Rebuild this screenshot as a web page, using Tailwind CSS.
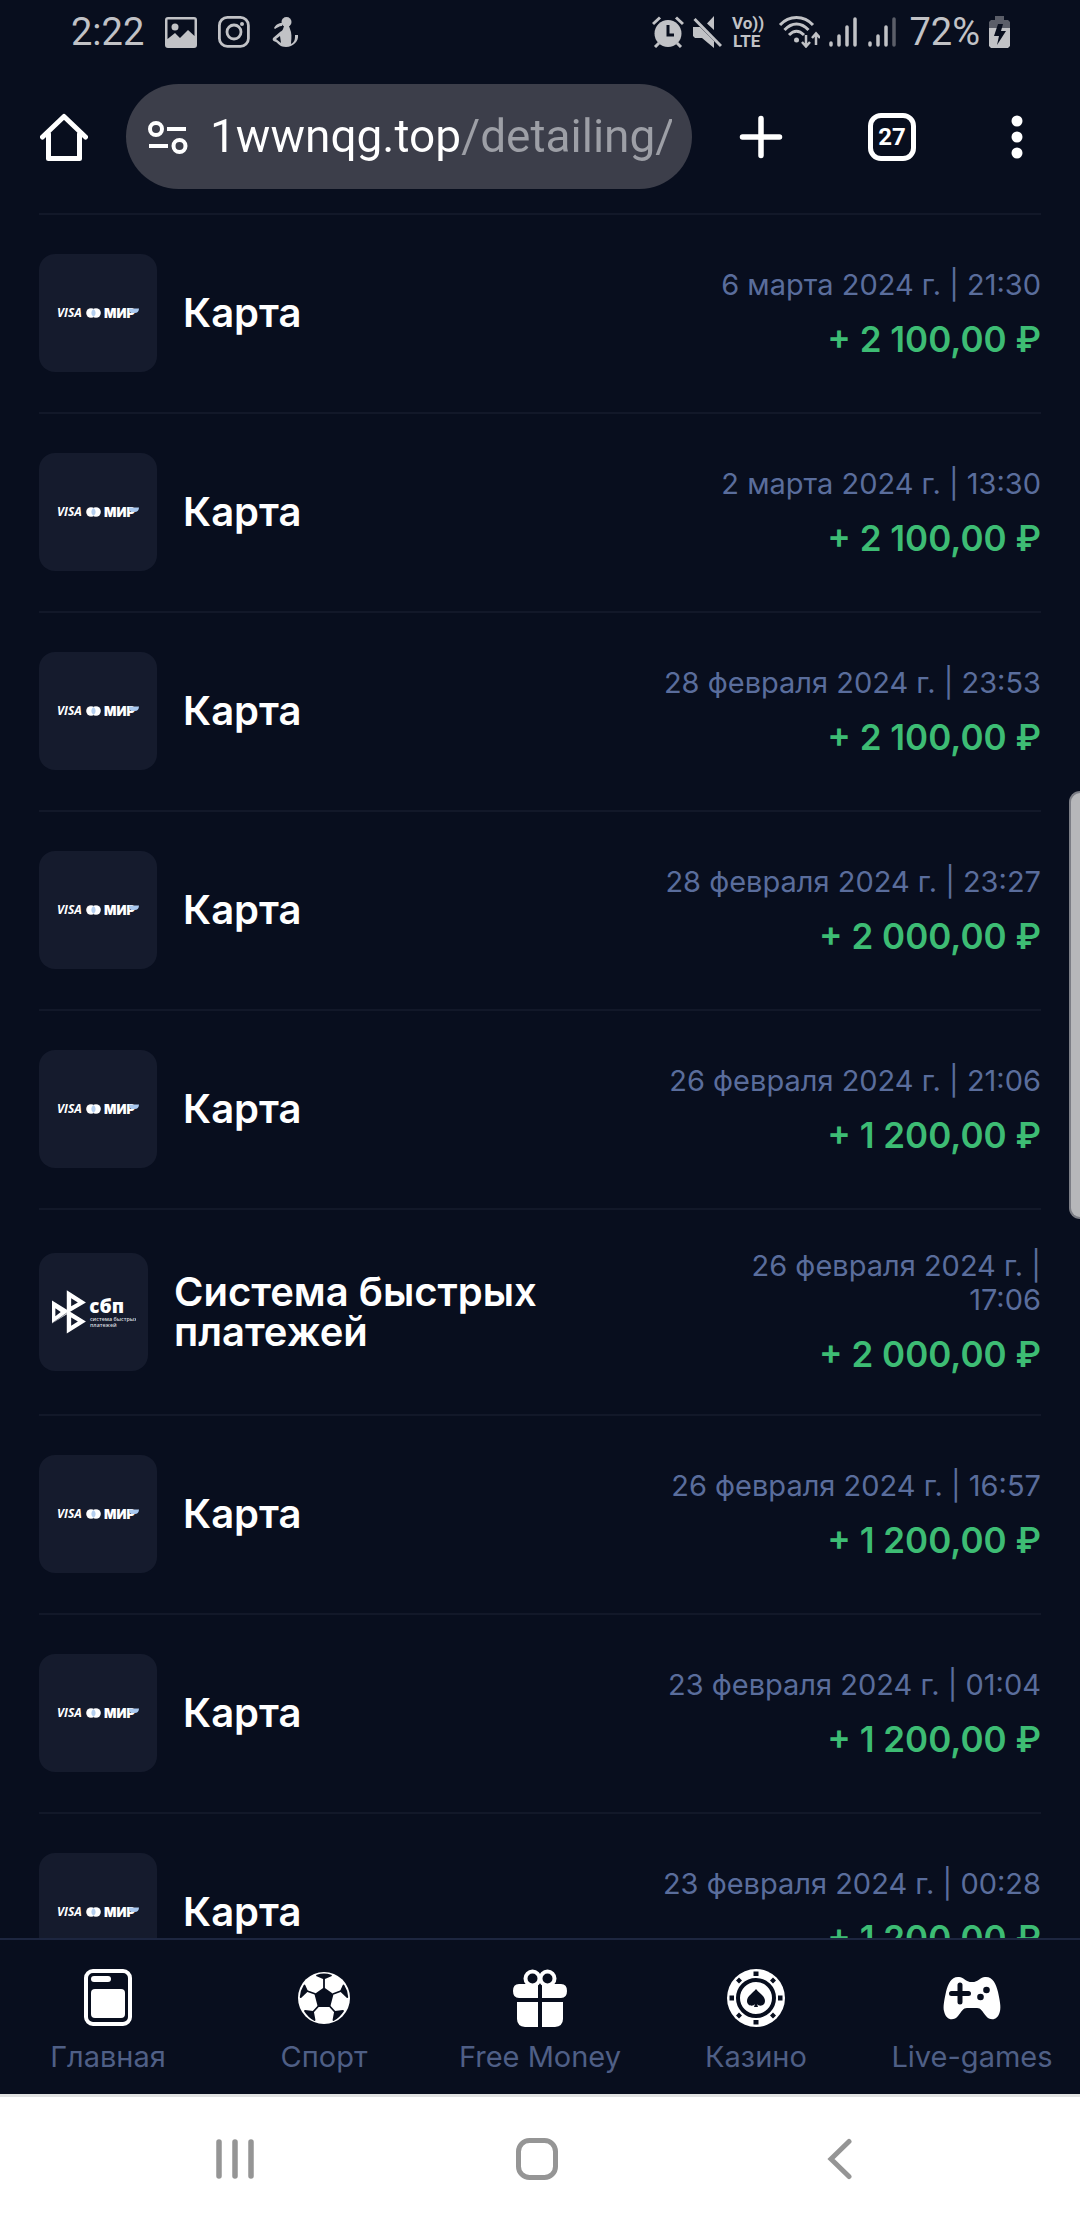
<!DOCTYPE html>
<html lang="ru">

<head>
  <meta charset="utf-8">
  <meta name="viewport" content="width=device-width, initial-scale=1">
  <title>Детализация</title>
  <script src="https://cdn.jsdelivr.net/npm/@tailwindcss/browser@4"></script>
</head>

<body class="relative flex h-screen flex-col overflow-hidden bg-[#080e1e] font-['Inter','Noto_Sans',sans-serif] text-white">
  <!-- logos -->
  <svg class="hidden">
    <symbol id="cards" viewBox="0 0 82 12">
      <text x="0" y="10" font-family="Open Sans, sans-serif" font-size="12" font-weight="700" font-style="italic" fill="#fff">VISA</text>
      <circle cx="34" cy="6" r="4.8" fill="#fff" />
      <circle cx="39" cy="6" r="4.8" fill="#fff" />
      <path d="M36.5 2a4.8 4.8 0 0 1 0 8a4.8 4.8 0 0 1 0-8z" fill="#b4cff0" />
      <text x="47" y="11" font-family="Inter, sans-serif" font-size="13" font-weight="900" fill="#fff">МИР</text>
      <path d="M72 1.5h10c0 3-2 4.500-4 4.500h-3c-1.500 0-3-2-3-4.500z" fill="#a9c8ee" />
    </symbol>
    <symbol id="sbp" viewBox="0 0 250 130">
      <path fill="#fff" fill-rule="evenodd" d="M44 0L101 37L44 70zM57 24V48L77 37z" />
      <path fill="#fff" fill-rule="evenodd" d="M0 31L101 93L44 129V72L0 99zM10 54V78L26 65zM57 81V106L77 93z" />
      <path d="M0 99L44 68" stroke="#151b2d" stroke-width="1.500" />
      <text x="111" y="69" font-family="Open Sans, sans-serif" font-size="56" font-weight="800" fill="#fff">сбп</text>
      <text x="113" y="93" font-family="Open Sans, sans-serif" font-size="16" fill="#d7d9df">система быстрых</text>
      <text x="113" y="109" font-family="Open Sans, sans-serif" font-size="16" fill="#d7d9df">платежей</text>
    </symbol>
  </svg>

  <!-- status bar -->
  <div class="flex h-16 shrink-0 items-center justify-between pr-[70px] pl-[71px] font-['Roboto',sans-serif] text-[38px] leading-none text-[#c1c2c6]">
    <div class="flex items-center gap-[21px]">
      <span>2:22</span>
      <svg class="h-8 w-8" viewBox="0 0 32 32" fill="currentColor">
        <path fill-rule="evenodd" d="M3 1h26a3 3 0 0 1 3 3v25a3 3 0 0 1-3 3H3a3 3 0 0 1-3-3V4a3 3 0 0 1 3-3zM2.500 3.500V23L10 17L15 22L23 14L29.500 20V3.500z" />
        <circle cx="10" cy="11" r="3.500" />
      </svg>
      <svg class="h-8 w-8" viewBox="0 0 32 32" fill="none" stroke="currentColor" stroke-width="2.800">
        <rect x="1.400" y="1.400" width="29" height="29" rx="8" />
        <circle cx="16" cy="16" r="7" />
        <circle cx="24" cy="8" r="2" fill="currentColor" stroke="none" />
      </svg>
      <svg class="h-8 w-7" viewBox="0 0 28 32" fill="currentColor">
        <circle cx="15.500" cy="6" r="5" />
        <path d="M3 12C6 7 9 7 12 7L11 10C8 10 6 12 4 13z" />
        <path fill-rule="evenodd" d="M13 10H18L20 16C21 21 20 25 20 28C24 26 24 23 24 19H27C28 25 22 31 15 31C9 31 8 28 5 26C2 25 1 24 2 22L9 16C11 15 12 14 13 10zM9 20L5 23L10 27z" />
      </svg>
    </div>
    <div class="flex items-center gap-[9px]">
      <svg class="h-8 w-8" viewBox="0 0 32 32" fill="none" stroke="currentColor" stroke-width="3">
        <circle cx="16" cy="17.500" r="13.500" fill="currentColor" stroke="none" />
        <path d="M1 8L8 1.500M24 1.500L31 8M7 27L3 31M25 27L29 31" />
        <path d="M16 9V19H22" stroke="#080e1e" />
      </svg>
      <svg class="h-8 w-[29px]" viewBox="0 0 29 32" fill="currentColor">
        <path d="M0 11H7L21 25V32L9 22H2L0 20zM21 0V14L14 7.500z" />
        <path d="M1.500 3L28 30" stroke="currentColor" stroke-width="3" />
      </svg>
      <svg class="h-10 w-[34px]" viewBox="0 0 34 40" fill="currentColor" font-family="Roboto, sans-serif" font-weight="700">
        <text x="1" y="17" font-size="17">Vo))</text>
        <text x="2" y="35" font-size="17">LTE</text>
      </svg>
      <svg class="h-8 w-[46px]" viewBox="0 0 46 32" fill="none" stroke="currentColor" stroke-width="3">
        <path d="M6 9C15-1 30-1 39 9M10.500 14C18 6 27 6 34.500 14M15 19C20 14 25 14 30 19" />
        <circle cx="22.500" cy="24" r="2.500" fill="currentColor" stroke="none" />
        <path d="M32 19V30M28 26L32 30.500L36 26M42 29V18M38 22L42 17.500L46 22" stroke-width="2.500" />
      </svg>
      <svg class="h-8 w-7" viewBox="0 0 28 32" fill="none" stroke="currentColor" stroke-width="3.500" stroke-linecap="round">
        <path d="M2 27V29M10 20V29M18 11V29M26 3V29" />
      </svg>
      <svg class="h-8 w-[30px]" viewBox="0 0 30 32" fill="none" stroke="currentColor" stroke-width="3.500" stroke-linecap="round">
        <path d="M4 27V29M12 20V29M20 11V29" />
        <path d="M28 3V29" stroke="#5b5e69" />
      </svg>
      <span class="pl-1">72%</span>
      <svg class="h-8 w-[21px]" viewBox="0 0 21 32">
        <path d="M6 0H15V4H19L21 6V13H0V6L2 4H6z" fill="#5b5e69" />
        <path d="M0 12H21V30L19 32H2L0 30z" fill="#c1c2c6" />
        <path d="M9 8H14L12 15H17L8 29L10 20H5z" fill="#080e1e" />
      </svg>
    </div>
  </div>

  <!-- browser bar -->
  <div class="flex shrink-0 items-center pt-5 pb-6 pl-10">
    <button type="button" aria-label="Домой" class="mr-[38px] shrink-0">
      <svg class="size-12" viewBox="0 0 48 48" fill="none" stroke="#fff" stroke-width="5" stroke-linecap="round" stroke-linejoin="round">
        <path d="M2.500 24L24 3.500L45.500 24M8.500 21V45.500H39.500V21" />
      </svg>
    </button>
    <div class="flex h-[105px] min-w-0 flex-1 items-center rounded-full bg-[#3c3e4a] pr-5 pl-[22px]">
      <svg class="h-9 w-10 shrink-0" viewBox="0 0 40 36" fill="none" stroke="#fff" stroke-width="4">
        <circle cx="8" cy="10" r="6" />
        <path d="M19 10H38M1 27H20" />
        <circle cx="31.500" cy="27" r="6" />
      </svg>
      <input type="text" aria-label="Адрес" value="1wwnqg.top/detailing/"
        class="ml-[22px] min-w-0 flex-1 bg-[linear-gradient(to_right,#fff_252px,#9d9fa6_252px)] bg-clip-text font-['Roboto',sans-serif] text-[46px] text-transparent outline-none" />
    </div>
    <button type="button" aria-label="Новая вкладка" class="flex w-[138px] shrink-0 justify-center">
      <svg class="size-11" viewBox="0 0 44 44" stroke="#fff" stroke-width="5.500" stroke-linecap="round">
        <path d="M22 3.500V40.500M3.500 22H40.500" />
      </svg>
    </button>
    <button type="button" aria-label="Вкладки" class="flex w-31 shrink-0 justify-center">
      <span class="flex size-12 items-center justify-center rounded-[13px] border-5 border-white font-['Roboto',sans-serif] text-2xl leading-none font-bold">27</span>
    </button>
    <button type="button" aria-label="Меню" class="flex w-[126px] shrink-0 justify-center">
      <svg class="h-11 w-3" viewBox="0 0 12 44" fill="#fff">
        <circle cx="6" cy="6" r="5.500" />
        <circle cx="6" cy="22" r="5.500" />
        <circle cx="6" cy="38" r="5.500" />
      </svg>
    </button>
  </div>

  <!-- payments -->
  <ul class="min-h-0 flex-1 overflow-hidden px-[39px] text-[40px] leading-10 font-semibold">
    <li class="flex items-center gap-[26px] border-t-2 border-[#121829] pt-[39px] pb-10">
      <div class="flex h-[118px] w-[118px] shrink-0 items-center justify-center rounded-2xl bg-[#151b2d]"><svg class="h-3 w-[82px]"><use href="#cards" /></svg></div>
      <h2 class="max-w-100">Карта</h2>
      <div class="ml-auto text-right">
        <p class="text-[29px] leading-[34px] font-normal text-[#5a6d9c]">6 марта 2024 г. | 21:30</p>
        <p class="mt-[18px] text-[35px] leading-[39px] text-[#3dbc74]">+ 2 100,00 ₽</p>
      </div>
    </li>
    <li class="flex items-center gap-[26px] border-t-2 border-[#121829] pt-[39px] pb-10">
      <div class="flex h-[118px] w-[118px] shrink-0 items-center justify-center rounded-2xl bg-[#151b2d]"><svg class="h-3 w-[82px]"><use href="#cards" /></svg></div>
      <h2 class="max-w-100">Карта</h2>
      <div class="ml-auto text-right">
        <p class="text-[29px] leading-[34px] font-normal text-[#5a6d9c]">2 марта 2024 г. | 13:30</p>
        <p class="mt-[18px] text-[35px] leading-[39px] text-[#3dbc74]">+ 2 100,00 ₽</p>
      </div>
    </li>
    <li class="flex items-center gap-[26px] border-t-2 border-[#121829] pt-[39px] pb-10">
      <div class="flex h-[118px] w-[118px] shrink-0 items-center justify-center rounded-2xl bg-[#151b2d]"><svg class="h-3 w-[82px]"><use href="#cards" /></svg></div>
      <h2 class="max-w-100">Карта</h2>
      <div class="ml-auto text-right">
        <p class="text-[29px] leading-[34px] font-normal text-[#5a6d9c]">28 февраля 2024 г. | 23:53</p>
        <p class="mt-[18px] text-[35px] leading-[39px] text-[#3dbc74]">+ 2 100,00 ₽</p>
      </div>
    </li>
    <li class="flex items-center gap-[26px] border-t-2 border-[#121829] pt-[39px] pb-10">
      <div class="flex h-[118px] w-[118px] shrink-0 items-center justify-center rounded-2xl bg-[#151b2d]"><svg class="h-3 w-[82px]"><use href="#cards" /></svg></div>
      <h2 class="max-w-100">Карта</h2>
      <div class="ml-auto text-right">
        <p class="text-[29px] leading-[34px] font-normal text-[#5a6d9c]">28 февраля 2024 г. | 23:27</p>
        <p class="mt-[18px] text-[35px] leading-[39px] text-[#3dbc74]">+ 2 000,00 ₽</p>
      </div>
    </li>
    <li class="flex items-center gap-[26px] border-t-2 border-[#121829] pt-[39px] pb-10">
      <div class="flex h-[118px] w-[118px] shrink-0 items-center justify-center rounded-2xl bg-[#151b2d]"><svg class="h-3 w-[82px]"><use href="#cards" /></svg></div>
      <h2 class="max-w-100">Карта</h2>
      <div class="ml-auto text-right">
        <p class="text-[29px] leading-[34px] font-normal text-[#5a6d9c]">26 февраля 2024 г. | 21:06</p>
        <p class="mt-[18px] text-[35px] leading-[39px] text-[#3dbc74]">+ 1 200,00 ₽</p>
      </div>
    </li>
    <li class="flex items-center gap-[26px] border-t-2 border-[#121829] pt-[39px] pb-10">
      <div class="flex h-[118px] w-[109px] shrink-0 items-center justify-center rounded-2xl bg-[#151b2d]"><svg class="h-11 w-[84px]"><use href="#sbp" /></svg></div>
      <h2 class="max-w-100">Система быстрых платежей</h2>
      <div class="ml-auto max-w-75 text-right">
        <p class="text-[29px] leading-[34px] font-normal text-[#5a6d9c]">26 февраля 2024 г. | 17:06</p>
        <p class="mt-[18px] text-[35px] leading-[39px] text-[#3dbc74]">+ 2 000,00 ₽</p>
      </div>
    </li>
    <li class="flex items-center gap-[26px] border-t-2 border-[#121829] pt-[39px] pb-10">
      <div class="flex h-[118px] w-[118px] shrink-0 items-center justify-center rounded-2xl bg-[#151b2d]"><svg class="h-3 w-[82px]"><use href="#cards" /></svg></div>
      <h2 class="max-w-100">Карта</h2>
      <div class="ml-auto text-right">
        <p class="text-[29px] leading-[34px] font-normal text-[#5a6d9c]">26 февраля 2024 г. | 16:57</p>
        <p class="mt-[18px] text-[35px] leading-[39px] text-[#3dbc74]">+ 1 200,00 ₽</p>
      </div>
    </li>
    <li class="flex items-center gap-[26px] border-t-2 border-[#121829] pt-[39px] pb-10">
      <div class="flex h-[118px] w-[118px] shrink-0 items-center justify-center rounded-2xl bg-[#151b2d]"><svg class="h-3 w-[82px]"><use href="#cards" /></svg></div>
      <h2 class="max-w-100">Карта</h2>
      <div class="ml-auto text-right">
        <p class="text-[29px] leading-[34px] font-normal text-[#5a6d9c]">23 февраля 2024 г. | 01:04</p>
        <p class="mt-[18px] text-[35px] leading-[39px] text-[#3dbc74]">+ 1 200,00 ₽</p>
      </div>
    </li>
    <li class="flex items-center gap-[26px] border-t-2 border-[#121829] pt-[39px] pb-10">
      <div class="flex h-[118px] w-[118px] shrink-0 items-center justify-center rounded-2xl bg-[#151b2d]"><svg class="h-3 w-[82px]"><use href="#cards" /></svg></div>
      <h2 class="max-w-100">Карта</h2>
      <div class="ml-auto text-right">
        <p class="text-[29px] leading-[34px] font-normal text-[#5a6d9c]">23 февраля 2024 г. | 00:28</p>
        <p class="mt-[18px] text-[35px] leading-[39px] text-[#3dbc74]">+ 1 200,00 ₽</p>
      </div>
    </li>
  </ul>

  <!-- edge handle over the list -->
  <div class="absolute top-[791px] right-0 h-[428px] w-[11px] rounded-l-[11px] border-2 border-r-0 border-[#7b7d85] bg-[#b6b7ba]"></div>

  <!-- site nav -->
  <nav class="grid shrink-0 grid-cols-5 border-t-2 border-[#1d2640] pt-[29px] pb-[19px] text-[29px] leading-9 text-[#4f5f86]">
    <a href="#" class="flex flex-col items-center gap-3">
      <svg class="size-[58px]" viewBox="0 0 58 58" fill="#fff">
        <rect x="7" y="2" width="44" height="53" rx="7" fill="none" stroke="#fff" stroke-width="4" />
        <rect x="12" y="7" width="20" height="6" rx="3" />
        <rect x="12" y="20" width="34" height="29" rx="4" />
      </svg>
      Главная
    </a>
    <a href="#" class="flex flex-col items-center gap-3">
      <svg class="size-[58px]" viewBox="0 0 58 58">
        <circle cx="29" cy="29" r="26" fill="#fff" />
        <g fill="#080e1e" stroke="#080e1e" stroke-width="1.800" stroke-linejoin="round">
          <path d="M29 19.500L37.500 25.500L34.500 37H23.500L20.500 25.500z" />
          <path d="M29 19V9.500M38 25L46 22M34.500 37L40 43M23.500 37L18 43M20.500 25L12 22" />
          <path d="M22 6.500Q29 4.500 36 6.500L29 9.500z" />
          <path d="M48.500 16.500Q52 22 52.300 28L46 22z" />
          <path d="M48 42Q44 48 38.500 51L40 43z" />
          <path d="M10 42Q14 48 19.500 51L18 43z" />
          <path d="M9.500 16.500Q6 22 5.700 28L12 22z" />
        </g>
      </svg>
      Спорт
    </a>
    <a href="#" class="flex flex-col items-center gap-3">
      <svg class="size-[58px]" viewBox="0 0 58 58" fill="#fff">
        <path d="M8 15H27V29H8Q2 29 2 22Q2 15 8 15zM31 15H50Q56 15 56 22Q56 29 50 29H31z" />
        <path d="M6 33H27V58H14Q6 57 6 50zM31 33H52V50Q52 57 44 58H31z" />
        <circle cx="21.500" cy="9.500" r="7" fill="none" stroke="#fff" stroke-width="4" />
        <circle cx="36.500" cy="9.500" r="7" fill="none" stroke="#fff" stroke-width="4" />
      </svg>
      Free Money
    </a>
    <a href="#" class="flex flex-col items-center gap-3">
      <svg class="size-[58px]" viewBox="0 0 58 58">
        <circle cx="29" cy="29" r="29" fill="#fff" />
        <circle cx="29" cy="29" r="18" fill="none" stroke="#080e1e" stroke-width="4" />
        <g fill="#080e1e">
          <path d="M26.500 2.500h5v4.500h-5zM26.500 51h5v4.500h-5zM2.500 26.500h4.500v5H2.500zM51 26.500h4.500v5H51z" />
          <path d="M9 11.500L12 8.500L15 11.500L12 14.500zM43 11.500L46 8.500L49 11.500L46 14.500zM9 46.500L12 43.500L15 46.500L12 49.500zM43 46.500L46 43.500L49 46.500L46 49.500z" />
          <path d="M29 20C32 24 38 27 38 32C38 37 32 38 30 35L31 38H27L28 35C26 38 20 37 20 32C20 27 26 24 29 20z" />
        </g>
      </svg>
      Казино
    </a>
    <a href="#" class="flex flex-col items-center gap-3">
      <svg class="size-[58px]" viewBox="0 0 58 58" fill="#fff">
        <path d="M15 8C20 7 22 13 29 13C36 13 38 7 43 8C50 8 53 15 55 23C57 32 58 38 57 42C55 52 47 52 43 47C39 42 38 39 34 39H24C20 39 19 42 15 47C11 52 3 52 1 42C0 38 1 32 3 23C5 15 8 8 15 8z" />
        <path d="M17 16V33M8.500 24.500H25.500" stroke="#080e1e" stroke-width="5" stroke-linecap="round" />
        <circle cx="43.500" cy="21" r="3.300" fill="#080e1e" />
        <circle cx="37.500" cy="28" r="3.300" fill="#080e1e" />
      </svg>
      Live-games
    </a>
  </nav>

  <!-- system buttons -->
  <div class="grid h-[126px] shrink-0 grid-cols-3 items-center justify-items-center border-t-3 border-[#e1e2e2] bg-white pr-[90px] pl-[84px]">
    <button type="button" aria-label="Недавние">
      <svg class="size-[42px]" viewBox="0 0 42 42" stroke="#959595" stroke-width="5.500" stroke-linecap="round">
        <path d="M5 4V38M21 4V38M37 4V38" />
      </svg>
    </button>
    <button type="button" aria-label="Главный экран">
      <svg class="size-[42px]" viewBox="0 0 42 42" fill="none" stroke="#959595" stroke-width="5">
        <rect x="2.500" y="2.500" width="37" height="37" rx="11" />
      </svg>
    </button>
    <button type="button" aria-label="Назад">
      <svg class="size-[42px]" viewBox="0 0 42 42" fill="none" stroke="#959595" stroke-width="5" stroke-linecap="round">
        <path d="M31 3.500L13 21L31 38.500" />
      </svg>
    </button>
  </div>
</body>

</html>
